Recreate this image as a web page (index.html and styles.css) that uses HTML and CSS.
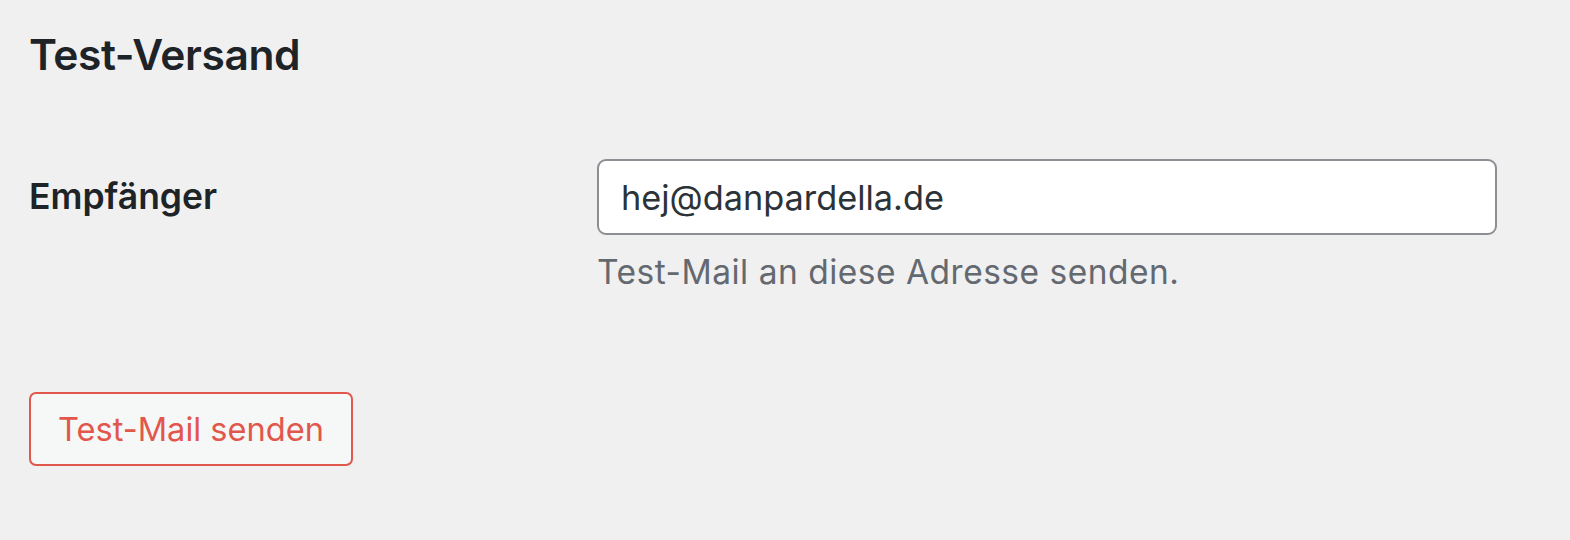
FILE: index.html
```html
<!DOCTYPE html>
<html lang="de">
<head>
<meta charset="utf-8">
<title>Test-Versand</title>
<link rel="stylesheet" href="styles.css">
</head>
<body>
<div class="wrap">
  <h2 class="title">Test-Versand</h2>
  <div class="form-table">
    <label class="row-label" for="recipient">Empfänger</label>
    <div class="row-field">
      <input id="recipient" class="regular-text" type="email" value="hej@danpardella.de">
      <p class="description">Test-Mail an diese Adresse senden.</p>
    </div>
  </div>
  <button class="button" type="button">Test-Mail senden</button>
</div>
</body>
</html>
```

FILE: styles.css
```css
html, body {
  margin: 0;
  padding: 0;
  background: #f0f0f1;
}
body {
  font-family: Inter, "Noto Sans", "Liberation Sans", sans-serif;
  color: #1d2327;
}
.wrap {
  padding: 29px 29px 0 29px;
}
.title {
  margin: 0;
  font-size: 42.5px;
  font-weight: 600;
  line-height: 1.2;
  letter-spacing: -0.4px;
  color: #1d2327;
}
.form-table {
  display: grid;
  grid-template-columns: 568px 898px;
  margin-top: 79px;
}
.row-label {
  font-size: 35.5px;
  font-weight: 600;
  line-height: 1.2;
  padding-top: 17px;
  color: #1d2327;
}
.row-field {
  display: flex;
  flex-direction: column;
}
.regular-text {
  box-sizing: border-box;
  width: 900px;
  height: 76px;
  margin: 0;
  padding: 0 22px;
  border: 2px solid #8c8f94;
  border-radius: 9px;
  background: #fff;
  font-family: inherit;
  font-size: 34.3px;
  color: #2c3338;
  outline: none;
}
.description {
  margin: 17px 0 0 0;
  font-size: 33.5px;
  line-height: 1.2;
  letter-spacing: 0.5px;
  color: #646970;
}
.button {
  display: inline-flex;
  align-items: center;
  box-sizing: border-box;
  margin-top: 100px;
  height: 74px;
  padding: 0 27px;
  border: 2px solid #e2574c;
  border-radius: 7px;
  background: #f6f7f7;
  font-family: inherit;
  font-size: 32.6px;
  color: #e2574c;
  cursor: pointer;
}
```
